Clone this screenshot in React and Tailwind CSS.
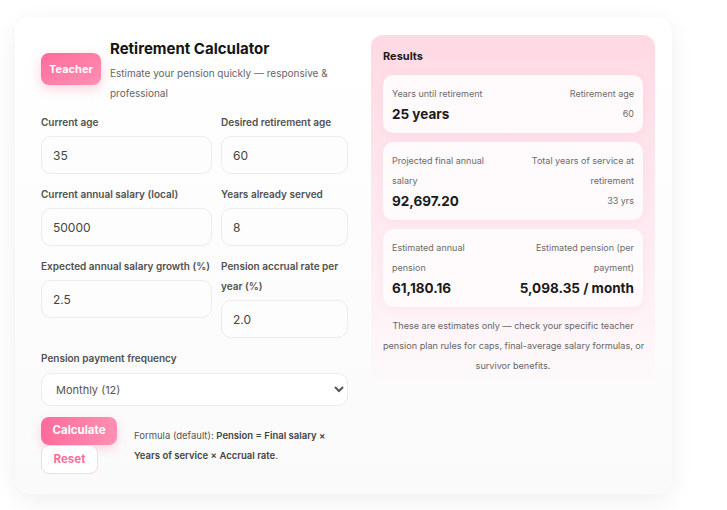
import React from "react";

function Field({ label, value }) {
  return (
    <div className="flex flex-col">
      <label className="text-[10px] font-semibold text-[#505050] leading-[20px] mb-[4px]">{label}</label>
      <input
        readOnly
        value={value}
        className="h-[38px] w-full rounded-[10px] border border-[#ececec] bg-[#fdfdfd] px-[11px] text-[12px] text-[#444] outline-none"
      />
    </div>
  );
}

function ResultCard({ lLabel, lValue, rLabel, rValue, rBig }) {
  return (
    <div className="flex justify-between gap-4 rounded-[10px] bg-[#fffbfc] px-[9px] py-[9px] shadow-[0_2px_8px_rgba(255,150,180,0.12)]">
      <div className="flex flex-col">
        <div className="text-[9px] leading-[20px] text-[#6b6b6b]">{lLabel}</div>
        <div className="text-[13.5px] font-bold leading-[20px] text-[#1a1a1a]">{lValue}</div>
      </div>
      <div className="flex flex-col items-end text-right">
        <div className="text-[9px] leading-[20px] text-[#6b6b6b]">{rLabel}</div>
        {rBig ? (
          <div className="text-[13.5px] font-bold leading-[20px] text-[#1a1a1a] whitespace-nowrap">{rValue}</div>
        ) : (
          <div className="text-[9px] leading-[20px] text-[#6b6b6b]">{rValue}</div>
        )}
      </div>
    </div>
  );
}

export default function App() {
  return (
    <div className="min-h-[510px] bg-white pt-[17px] font-['Inter',sans-serif]">
      <div className="ml-[15px] w-[657px] rounded-[16px] bg-gradient-to-b from-white to-[#fafafa] shadow-[0_6px_24px_rgba(0,0,0,0.07)] pl-[26px] pr-[17px] pt-[18px] pb-[20px] flex gap-[23px]">
        <div className="w-[307px] flex flex-col">
          <div className="flex items-center gap-[9px]">
            <div className="flex h-[32px] w-[60px] shrink-0 items-center justify-center rounded-[8px] bg-gradient-to-br from-[#ff6b9b] to-[#ff8fb3] text-[11px] font-bold text-white shadow-[0_4px_12px_rgba(255,105,150,0.3)]">
              Teacher
            </div>
            <div className="flex flex-col">
              <h1 className="text-[15px] font-bold leading-[28px] text-[#151515]">Retirement Calculator</h1>
              <p className="text-[10px] leading-[20px] text-[#666]">
                Estimate your pension quickly — responsive &amp;<br />professional
              </p>
            </div>
          </div>

          <div className="mt-[9px] grid grid-cols-[171px_127px] gap-x-[9px] gap-y-[10px] items-start">
            <Field label="Current age" value="35" />
            <Field label="Desired retirement age" value="60" />
            <Field label="Current annual salary (local)" value="50000" />
            <Field label="Years already served" value="8" />
            <Field label="Expected annual salary growth (%)" value="2.5" />
            <Field label="Pension accrual rate per year (%)" value="2.0" />
          </div>

          <div className="mt-[10px] flex flex-col">
            <label className="text-[10px] font-semibold text-[#505050] leading-[20px] mb-[5px]">Pension payment frequency</label>
            <select className="h-[33px] w-full rounded-[10px] border border-[#ececec] bg-white px-[10px] text-[11px] text-[#555] outline-none">
              <option>Monthly (12)</option>
            </select>
          </div>

          <div className="mt-[11px] flex items-center gap-[17px]">
            <div className="flex flex-col items-start">
              <button className="h-[28px] w-[76px] rounded-[8px] bg-gradient-to-r from-[#ff6b9b] to-[#ff8fb3] text-[11.5px] font-bold text-white shadow-[0_4px_10px_rgba(255,105,150,0.25)]">
                Calculate
              </button>
              <button className="h-[29px] w-[57px] rounded-[8px] border border-[#ffd3e0] bg-white text-[11.5px] font-bold text-[#ff6b9b]">
                Reset
              </button>
            </div>
            <p className="text-[9.5px] leading-[20px] text-[#555] whitespace-nowrap">
              Formula (default): <b className="font-semibold text-[#444]">Pension = Final salary ×<br />Years of service × Accrual rate</b>.
            </p>
          </div>
        </div>

        <div className="w-[284px] self-start rounded-[12px] bg-gradient-to-b from-[#ffd9e4] to-[#fdfafb] px-[12px] pt-[11px] pb-[11px]">
          <div className="text-[11px] font-bold leading-[20px] text-[#1a1a1a]">Results</div>
          <div className="mt-[9px] flex flex-col gap-[9px]">
            <ResultCard lLabel="Years until retirement" lValue="25 years" rLabel="Retirement age" rValue="60" />
            <ResultCard
              lLabel={<>Projected final annual<br />salary</>}
              lValue="92,697.20"
              rLabel={<>Total years of service at<br />retirement</>}
              rValue="33 yrs"
            />
            <ResultCard
              lLabel={<>Estimated annual<br />pension</>}
              lValue="61,180.16"
              rLabel={<>Estimated pension (per<br />payment)</>}
              rValue="5,098.35 / month"
              rBig
            />
          </div>
          <p className="mt-[9px] text-center text-[9.1px] leading-[20px] text-[#666] whitespace-nowrap">
            These are estimates only — check your specific teacher<br />pension plan rules for caps, final-average salary formulas, or<br />survivor benefits.
          </p>
        </div>
      </div>
    </div>
  );
}
